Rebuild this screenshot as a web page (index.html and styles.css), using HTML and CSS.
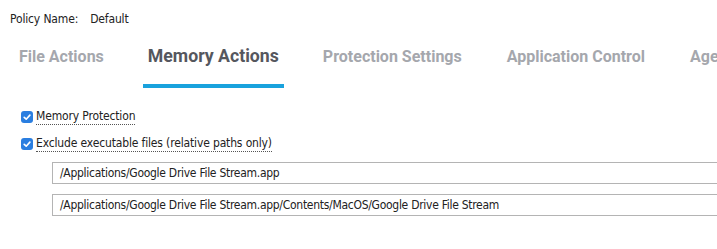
FILE: index.html
```html
<!DOCTYPE html>
<html>
<head>
<meta charset="utf-8">
<link rel="stylesheet" href="styles.css">
</head>
<body>
<div class="page">
  <div class="policy"><span class="label">Policy Name:</span><span class="value">Default</span></div>
  <nav class="tabs">
    <div class="tab t1">File Actions</div>
    <div class="tab active t2">Memory Actions</div>
    <div class="tab t3">Protection Settings</div>
    <div class="tab t4">Application Control</div>
    <div class="tab t5">Agent Settings</div>
  </nav>
  <div class="options">
    <label class="opt"><span class="cb"><svg viewBox="0 0 12 12" width="12" height="12"><path d="M3.2 6.3 L5.2 8.2 L8.9 4.1" fill="none" stroke="#fff" stroke-width="1.6" stroke-linecap="round" stroke-linejoin="round"/></svg></span><span class="txt">Memory Protection</span></label>
    <label class="opt"><span class="cb"><svg viewBox="0 0 12 12" width="12" height="12"><path d="M3.2 6.3 L5.2 8.2 L8.9 4.1" fill="none" stroke="#fff" stroke-width="1.6" stroke-linecap="round" stroke-linejoin="round"/></svg></span><span class="txt">Exclude executable files (relative paths only)</span></label>
  </div>
  <div class="paths">
    <div class="field">/Applications/Google Drive File Stream.app</div>
    <div class="field">/Applications/Google Drive File Stream.app/Contents/MacOS/Google Drive File Stream</div>
  </div>
</div>
</body>
</html>
```
FILE: styles.css
```css
html, body { margin: 0; padding: 0; background: #fff; overflow: hidden; }
.page { width: 717px; height: 249px; overflow: hidden; font-family: "DejaVu Sans Condensed", "DejaVu Sans", sans-serif; color: #222; }
.policy { padding: 11px 0 0 10px; font-size: 12px; height: 16px; line-height: 16px; white-space: nowrap; letter-spacing: -0.15px; }
.policy .value { margin-left: 12px; }
.tabs { display: flex; align-items: baseline; white-space: nowrap; margin-top: 19px; height: 45px; overflow: hidden; }
.tab { font-family: Roboto, sans-serif; font-weight: 700; font-size: 16px; color: #a5a7ad; line-height: 20px; padding: 0; flex: none; }
.tab.t1 { margin-left: 19px; }
.tab.t2 { margin-left: 44px; }
.tab.t3 { margin-left: 44px; }
.tab.t4 { margin-left: 45px; }
.tab.t5 { margin-left: 45px; }
.tab.active { color: #55575e; font-size: 17.7px; position: relative; }
.tab.active::after { content: ""; position: absolute; left: -5px; right: -5px; top: 38px; height: 4px; background: #19a2dd; }
.options { display: flex; flex-direction: column; gap: 9px; margin-top: 17px; padding-left: 21px; }
.opt { display: flex; align-items: center; height: 18px; font-size: 12px; letter-spacing: -0.15px; }
.cb { width: 12px; height: 12px; border-radius: 3px; background: #2a7ee0; display: flex; margin-right: 3px; }
.txt { border-bottom: 1px dotted #555; line-height: 15px; color: #222; }
.paths { display: flex; flex-direction: column; gap: 10px; margin-top: 9px; padding-left: 52px; }
.field { width: 700px; height: 22px; box-sizing: border-box; border: 1px solid #b4b4b4; font-size: 12px; line-height: 20px; padding-left: 7px; color: #222; white-space: nowrap; letter-spacing: -0.28px; }
```
